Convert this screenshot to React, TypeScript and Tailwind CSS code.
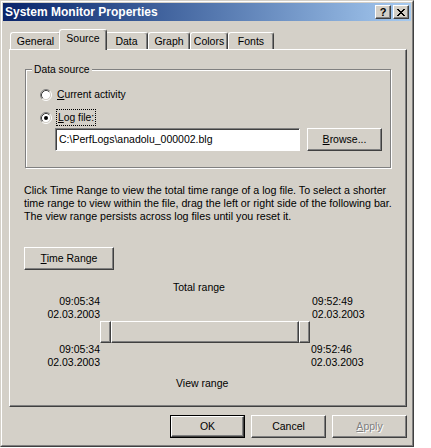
import React from "react";

const raised =
  "border border-t-white border-l-white border-r-[#404040] border-b-[#404040] shadow-[inset_-1px_-1px_0_#808080]";

function Radio({ checked }: { checked?: boolean }) {
  return (
    <svg width="12" height="12" viewBox="0 0 12 12" className="shrink-0">
      <circle cx="6" cy="6" r="5.5" fill="#d4d0c8" />
      <path d="M2.11 9.89 A5.5 5.5 0 0 1 9.89 2.11" stroke="#808080" strokeWidth="1" fill="none" />
      <path d="M9.89 2.11 A5.5 5.5 0 0 1 2.11 9.89" stroke="#ffffff" strokeWidth="1" fill="none" />
      <circle cx="6" cy="6" r="4.5" fill="#ffffff" />
      <path d="M2.82 9.18 A4.5 4.5 0 0 1 9.18 2.82" stroke="#404040" strokeWidth="1" fill="none" />
      <path d="M9.18 2.82 A4.5 4.5 0 0 1 2.82 9.18" stroke="#d4d0c8" strokeWidth="1" fill="none" />
      {checked && <circle cx="6" cy="6" r="2" fill="#000" />}
    </svg>
  );
}

function Button({
  children,
  w,
  isDefault,
  disabled,
}: {
  children: React.ReactNode;
  w: string;
  isDefault?: boolean;
  disabled?: boolean;
}) {
  const inner = (
    <div
      className={`h-full w-full flex items-center justify-center ${raised} ${
        disabled ? "text-[#808080] [text-shadow:1px_1px_0_#ffffff]" : "text-black"
      }`}
    >
      {children}
    </div>
  );
  if (isDefault) {
    return <div className={`${w} h-[23px] border border-black`}>{inner}</div>;
  }
  return <div className={`${w} h-[23px]`}>{inner}</div>;
}

function Tab({ label, w, selected }: { label: string; w: string; selected?: boolean }) {
  return (
    <div
      className={`${w} ${
        selected ? "h-[21px] -mx-[2px] -mb-[1px] z-10 pb-[3px]" : "h-[17px]"
      } relative flex items-center justify-center bg-[#d4d0c8] border-t border-l border-r border-t-white border-l-white border-r-[#404040] rounded-t-[3px] shadow-[inset_-1px_0_0_#808080] text-[10.5px]`}
    >
      {label}
    </div>
  );
}

export default function App() {
  return (
    <div className="w-[431px] h-[448px] bg-white font-['Liberation_Sans',Arial,sans-serif] text-[10px] leading-[13px] text-black">
      <div className="w-[414px] h-[447px] bg-[#d4d0c8] border border-t-[#d4d0c8] border-l-[#d4d0c8] border-r-[#404040] border-b-[#404040]">
        <div className="h-full w-full border border-t-white border-l-white border-r-[#808080] border-b-[#808080] p-[1px] flex flex-col">
          {/* Title bar */}
          <div className="h-[18px] shrink-0 flex items-center bg-gradient-to-r from-[#0a246a] to-[#a6caf0] pl-[2px] pr-[2px]">
            <span className="text-white font-bold text-[12px] leading-[13px] whitespace-nowrap">
              System Monitor Properties
            </span>
            <div className="ml-auto flex items-center">
              <div className={`w-[16px] h-[14px] bg-[#d4d0c8] ${raised} flex items-center justify-center font-bold text-[11px] leading-none`}>
                ?
              </div>
              <div className={`ml-[2px] w-[16px] h-[14px] bg-[#d4d0c8] ${raised} flex items-center justify-center`}>
                <svg width="8" height="7" viewBox="0 0 8 7">
                  <path d="M0 0h2v1h-2zM6 0h2v1h-2zM1 1h2v1h-2zM5 1h2v1h-2zM2 2h4v1h-4zM3 3h2v1h-2zM2 4h4v1h-4zM1 5h2v1h-2zM5 5h2v1h-2zM0 6h2v1h-2zM6 6h2v1h-2z" fill="#000" />
                </svg>
              </div>
            </div>
          </div>

          {/* Body */}
          <div className="pl-[6px] pt-[8px] flex flex-col">
            {/* Tabs */}
            <div className="h-[20px] flex items-end pl-[1px]">
              <Tab label="General" w="w-[51px]" />
              <Tab label="Source" w="w-[48px]" selected />
              <Tab label="Data" w="w-[43px]" />
              <Tab label="Graph" w="w-[42px]" />
              <Tab label="Colors" w="w-[38px]" />
              <Tab label="Fonts" w="w-[46px]" />
            </div>

            {/* Panel */}
            <div className="w-[398px] h-[358px] border-t border-l border-t-white border-l-white border-r border-b border-r-[#404040] border-b-[#404040] shadow-[inset_-1px_-1px_0_#808080] flex flex-col">
              {/* Group box */}
              <div className="ml-[15px] mt-[19px] w-[366px] h-[99px] relative border border-[#808080] shadow-[inset_1px_1px_0_#ffffff,1px_1px_0_#ffffff] pl-[14px] flex flex-col">
                <span className="absolute left-[6px] top-[-7px] px-[2px] bg-[#d4d0c8] leading-[13px] whitespace-nowrap text-[10.3px]">
                  Data source
                </span>
                <div className="mt-[18px] h-[13px] flex items-center">
                  <Radio />
                  <span className="ml-[5px] whitespace-nowrap text-[10.3px]">
                    <u>C</u>urrent activity
                  </span>
                </div>
                <div className="mt-[8px] h-[17px] flex items-center">
                  <Radio checked />
                  <span className="ml-[4px] whitespace-nowrap border border-dotted border-black px-[1px] py-[1px] leading-[13px] text-[10.3px]">
                    <u>L</u>og file:
                  </span>
                </div>
                <div className="mt-[2px] ml-[15px] flex items-center">
                  <div className="w-[245px] h-[23px] bg-white border border-t-[#808080] border-l-[#808080] border-r-white border-b-white shadow-[inset_1px_1px_0_#404040] flex items-center pl-[3px] whitespace-nowrap text-[10.5px]">
                    C:\PerfLogs\anadolu_000002.blg
                  </div>
                  <div className="ml-[7px]">
                    <Button w="w-[75px]">
                      <span className="text-[10.5px]">
                        <u>B</u>rowse...
                      </span>
                    </Button>
                  </div>
                </div>
              </div>

              {/* Paragraph */}
              <div className="ml-[14px] mt-[16px] whitespace-nowrap text-[10.7px]">
                <div>Click Time Range to view the total time range of a log file. To select a shorter</div>
                <div>time range to view within the file, drag the left or right side of the following bar.</div>
                <div>The view range persists across log files until you reset it.</div>
              </div>

              <div className="ml-[14px] mt-[24px]">
                <Button w="w-[90px]">
                  <span className="text-[10.5px]">
                    <u>T</u>ime Range
                  </span>
                </Button>
              </div>

              <div className="mt-[11px] ml-[163px] whitespace-nowrap text-[10.5px]">Total range</div>

              <div className="mt-[1px] flex text-[10.5px]">
                <div className="w-[90px] text-right">
                  <div>09:05:34</div>
                  <div>02.03.2003</div>
                </div>
                <div className="w-[210px]" />
                <div className="pl-[2px]">
                  <div>09:52:49</div>
                  <div>02.03.2003</div>
                </div>
              </div>

              <div className="ml-[90px] w-[210px] h-[22px] flex">
                <div className={`w-[11px] h-full ${raised}`} />
                <div className={`flex-1 h-full ${raised}`} />
                <div className={`w-[11px] h-full ${raised}`} />
              </div>

              <div className="flex text-[10.5px]">
                <div className="w-[90px] text-right">
                  <div>09:05:34</div>
                  <div>02.03.2003</div>
                </div>
                <div className="w-[210px]" />
                <div className="pl-[1px]">
                  <div>09:52:46</div>
                  <div>02.03.2003</div>
                </div>
              </div>

              <div className="mt-[8px] ml-[166px] whitespace-nowrap text-[10.5px]">View range</div>
            </div>

            {/* Bottom buttons */}
            <div className="w-[398px] mt-[8px] flex justify-end gap-[6px] text-[10.5px]">
              <Button w="w-[75px]" isDefault>
                OK
              </Button>
              <Button w="w-[75px]">Cancel</Button>
              <Button w="w-[75px]" disabled>
                <span>
                  <u>A</u>pply
                </span>
              </Button>
            </div>
          </div>
        </div>
      </div>
    </div>
  );
}
